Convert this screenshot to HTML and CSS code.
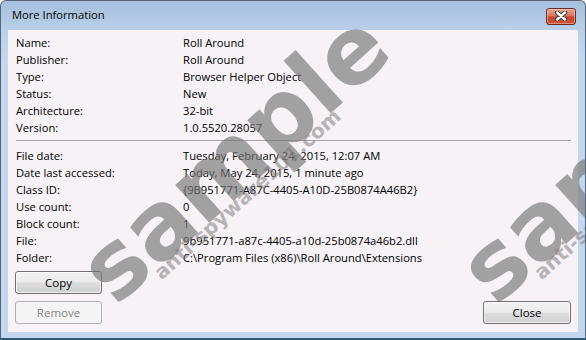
FILE: index.html
```html
<!DOCTYPE html>
<html lang="en">
<head>
    <meta charset="UTF-8">
    <title>More Information</title>
    <link rel="stylesheet" href="styles.css">
</head>
<body>
    <div class="window">
        <div class="titlebar">
            <span class="title">More Information</span>
            <button class="btn-x" title="Close">
                <svg width="14" height="10" viewBox="0 0 14 10">
                    <path d="M3 1.5 L11 8.5 M11 1.5 L3 8.5" stroke="#3c3c44" stroke-width="4.4" stroke-linecap="round" fill="none"/>
                    <path d="M3 1.5 L11 8.5 M11 1.5 L3 8.5" stroke="#fff" stroke-width="2.4" stroke-linecap="round" fill="none"/>
                </svg>
            </button>
        </div>
        <div class="content">
            <dl class="props">
                <dt>Name:</dt><dd>Roll Around</dd>
                <dt>Publisher:</dt><dd>Roll Around</dd>
                <dt>Type:</dt><dd>Browser Helper Object</dd>
                <dt>Status:</dt><dd>New</dd>
                <dt>Architecture:</dt><dd>32-bit</dd>
                <dt>Version:</dt><dd>1.0.5520.28057</dd>
            </dl>
            <hr class="sep">
            <dl class="props">
                <dt>File date:</dt><dd>Tuesday, February 24, 2015, 12:07 AM</dd>
                <dt>Date last accessed:</dt><dd>Today, May 24, 2015, 1 minute ago</dd>
                <dt>Class ID:</dt><dd>{9B951771-A87C-4405-A10D-25B0874A46B2}</dd>
                <dt>Use count:</dt><dd>0</dd>
                <dt>Block count:</dt><dd>1</dd>
                <dt>File:</dt><dd>9b951771-a87c-4405-a10d-25b0874a46b2.dll</dd>
                <dt>Folder:</dt><dd>C:\Program Files (x86)\Roll Around\Extensions</dd>
            </dl>
            <div class="actions">
                <button class="btn">Copy</button>
                <div class="actions-row">
                    <button class="btn" disabled>Remove</button>
                    <button class="btn btn-close">Close</button>
                </div>
            </div>
        </div>

        <div class="watermark">
            <div class="mark mark-1">
                <div class="mark-big">sample</div>
                <div class="mark-small">anti-spyware101.com</div>
            </div>
            <div class="mark mark-2">
                <div class="mark-big">sample</div>
                <div class="mark-small">anti-spyware101.com</div>
            </div>
        </div>
    </div>
</body>
</html>
```

FILE: styles.css
```css
body {
    margin: 0;
    padding: 0;
    font-family: "Open Sans", "Noto Sans", sans-serif;
    font-size: 11.2px;
    color: #000;
    background: #fff;
}
.window {
    position: relative;
    width: 586px;
    height: 340px;
    box-sizing: border-box;
    border: 1px solid #56657a;
    border-bottom: 2px solid #2c5a78;
    border-radius: 6px 6px 0 0;
    background: linear-gradient(#a6bfdc, #bad0ea 30px, #c3d8ef 60px, #c3d8ef);
    overflow: hidden;
}
.titlebar {
    display: flex;
    align-items: center;
    justify-content: space-between;
    height: 29px;
    box-sizing: border-box;
    padding: 0 9px 4px 11px;
}
.title {
    line-height: 16px;
    padding-top: 3px;
}
.btn-x {
    display: flex;
    align-items: center;
    justify-content: center;
    width: 30px;
    height: 17px;
    padding: 0;
    margin-top: 5px;
    border: 1px solid #6f2b22;
    border-radius: 3px;
    background: linear-gradient(#e9a99b, #d77560 45%, #c5452e 55%, #c9563c);
    box-shadow: inset 0 0 0 1px rgba(255, 220, 210, 0.45);
}
.content {
    height: 302px;
    margin: 0 7px;
    box-sizing: border-box;
    padding: 4px 7px 8px 8px;
    background: #f6f2f6;
    display: flex;
    flex-direction: column;
}
.props {
    display: grid;
    grid-template-columns: 167px 1fr;
    margin: 0;
    line-height: 17px;
}
.props dt,
.props dd {
    margin: 0;
    white-space: nowrap;
}
.sep {
    margin: 4px 0 6px;
    border: none;
    border-top: 1px solid #a3a3a3;
    height: 0;
}
.actions {
    margin-top: 5px;
}
.actions-row {
    display: flex;
    justify-content: space-between;
    margin-top: 7px;
}
.btn {
    display: block;
    width: 87px;
    height: 23px;
    margin-left: -1px;
    padding: 0;
    font-family: inherit;
    font-size: 11.5px;
    color: #000;
    border: 1px solid #707070;
    border-radius: 3px;
    background: linear-gradient(#f2f2f2, #ebebeb 48%, #dddddd 52%, #cfcfcf);
    box-shadow: inset 0 0 0 1px rgba(255, 255, 255, 0.7);
}
.btn:disabled {
    color: #838383;
    border-color: #adb2b5;
    background: #f4f4f4;
    box-shadow: none;
}
.btn-close {
    width: 88px;
    margin-left: 0;
}
.watermark {
    position: absolute;
    top: 0;
    left: 0;
    right: 0;
    bottom: 0;
    pointer-events: none;
}
.mark {
    position: absolute;
    top: 110px;
    width: 480px;
    text-align: center;
    font-family: "DejaVu Sans", sans-serif;
    font-weight: bold;
    transform: rotate(-42deg);
}
.mark-1 {
    left: -6px;
}
.mark-2 {
    left: 374px;
}
.mark-big {
    font-size: 93px;
    line-height: 92px;
    color: rgba(118, 118, 118, 0.66);
    letter-spacing: 0;
}
.mark-small {
    margin-top: -22px;
    padding-right: 30px;
    font-size: 20px;
    line-height: 24px;
    color: rgba(125, 125, 125, 0.55);
}
```
